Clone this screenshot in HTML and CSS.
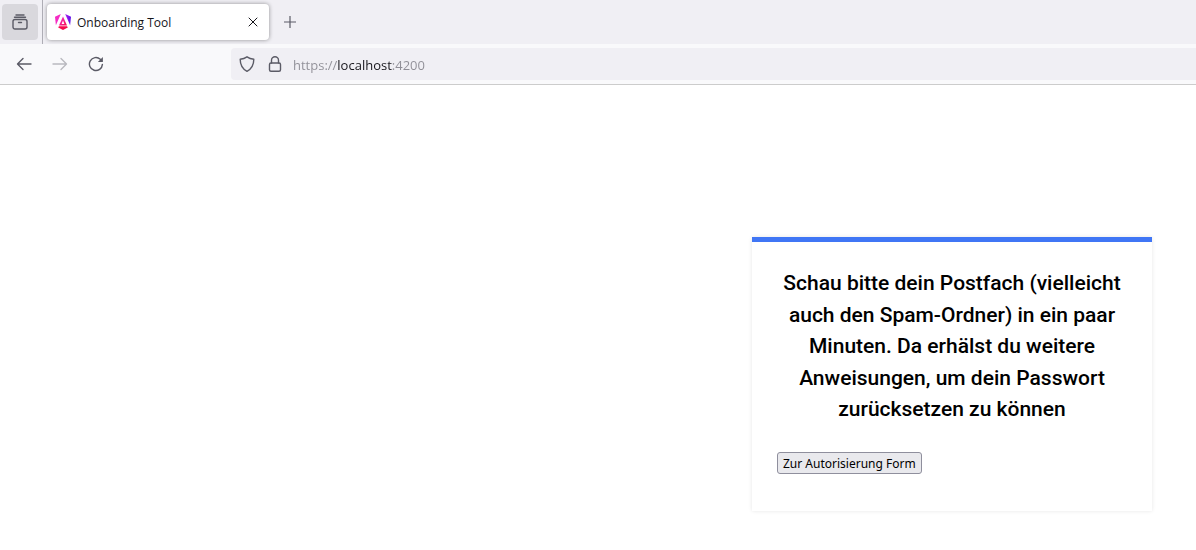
FILE: index.html
```html
<!DOCTYPE html>
<html lang="de">
<head>
<meta charset="utf-8">
<meta name="viewport" content="width=device-width, initial-scale=1">
<title>Onboarding Tool</title>
<link rel="stylesheet" href="styles.css">
</head>
<body>
<header class="browser">
  <div class="tabbar">
    <button class="firefox-view" type="button" aria-label="Firefox View">
      <svg class="icon" viewBox="0 0 16 16"><path d="M4 1h8M2.5 3.3h11"/><rect x="1" y="5.500" width="14" height="9.500" rx="2"/><path d="M6.500 8.500h3"/></svg>
    </button>
    <div class="tab">
      <svg class="logo" viewBox="0 0 16 16" aria-hidden="true">
        <defs>
          <linearGradient id="wing" x1="0" y1="0" x2="1" y2="0"><stop offset="0" stop-color="#b01bf0"/><stop offset="1" stop-color="#5c13e8"/></linearGradient>
          <linearGradient id="core" x1="0" y1="0" x2="1" y2="1"><stop offset="0" stop-color="#f42bdc"/><stop offset="1" stop-color="#f60b49"/></linearGradient>
        </defs>
        <path fill="#f52bc4" d="M5.800 0 0 2.700l.9 8.600z"/>
        <path fill="url(#wing)" d="M10.200 0 16 2.700l-.9 8.600z"/>
        <path fill="url(#core)" fill-rule="evenodd" d="M8 2.500 4 11.500h8zM8 6.500l1.400 3.400H6.600z"/>
        <path fill="#f6084f" d="M3.900 12.300h8.200l.7 1.300L8 16l-4.800-2.400z"/>
      </svg>
      <span class="tab-title">Onboarding Tool</span>
      <button class="icon-button tab-close" type="button" aria-label="Tab schließen">
        <svg class="icon icon-small" viewBox="0 0 10 10"><path d="M1 1l8 8M9 1 1 9"/></svg>
      </button>
    </div>
    <button class="icon-button new-tab" type="button" aria-label="Neuer Tab">
      <svg class="icon icon-plus" viewBox="0 0 12 12"><path d="M6 0v12M0 6h12"/></svg>
    </button>
  </div>
  <div class="toolbar">
    <nav class="history" aria-label="Navigation">
      <button class="icon-button" type="button" aria-label="Zurück">
        <svg class="icon" viewBox="0 0 16 16"><path d="M15 8H1.600M7 2.500 1.500 8 7 13.500"/></svg>
      </button>
      <button class="icon-button" type="button" aria-label="Vor" disabled>
        <svg class="icon" viewBox="0 0 16 16"><path d="M1 8h13.400M9 2.500 14.500 8 9 13.500"/></svg>
      </button>
      <button class="icon-button" type="button" aria-label="Neu laden">
        <svg class="icon" viewBox="0 0 16 16"><path d="M14.400 8.400A6.500 6.500 0 1 1 12.300 3.200L13.500 4.400"/><path class="solid" d="M14.900 1v5H9.900z"/></svg>
      </button>
    </nav>
    <div class="address">
      <svg class="icon" viewBox="0 0 16 16"><path d="M8 .8C6 2.100 3.800 2.900 1.200 3.300c0 5.400 1.500 9.300 6.800 12 5.300-2.700 6.800-6.600 6.800-12C12.200 2.900 10 2.100 8 .8z"/></svg>
      <svg class="icon" viewBox="0 0 16 16"><rect x="2.500" y="7" width="11" height="8.300" rx="1.500"/><path d="M4.500 7V4.200a3.500 3.500 0 0 1 7 0V7"/></svg>
      <input class="url" type="text" aria-label="Adresse" value="https://localhost:4200" spellcheck="false">
    </div>
  </div>
</header>
<main class="page">
  <section class="card">
    <h1 class="message">Schau bitte dein Postfach (vielleicht auch den Spam-Ordner) in ein paar Minuten. Da erhälst du weitere Anweisungen, um dein Passwort zurücksetzen zu können</h1>
    <button class="action" type="button">Zur Autorisierung Form</button>
  </section>
</main>
</body>
</html>
```

FILE: styles.css
```css
* {
  box-sizing: border-box;
}

body {
  margin: 0;
  background: #fff;
  color: #000;
  font-family: Roboto, sans-serif;
}

button {
  font: inherit;
  color: inherit;
}

.browser {
  color: #5b5b66;
  font-family: "Open Sans", "Noto Sans", sans-serif;
  border-bottom: 1px solid #ccc;
}

.tabbar {
  display: flex;
  align-items: center;
  height: 44px;
  background: #f0eff4;
}

.firefox-view {
  display: grid;
  place-items: center;
  width: 36px;
  height: 36px;
  margin: 0 4px 0 2px;
  padding: 0;
  border: 0;
  border-radius: 4px;
  background: #d9d8dd;
}

.tab {
  position: relative;
  display: flex;
  align-items: center;
  gap: 6px;
  width: 222px;
  height: 36px;
  margin-left: 5px;
  padding: 0 8px;
  border-radius: 4px;
  background: #fff;
  box-shadow: 0 0 4px rgba(0, 0, 0, 0.4);
  color: #15141a;
  font-size: 12px;
}

.tab::before {
  content: "";
  position: absolute;
  left: -5px;
  top: -4px;
  width: 1px;
  height: 44px;
  background: #aeadb5;
}

.logo {
  width: 16px;
  height: 16px;
}

.tab-title {
  flex: 1;
}

.icon-button {
  display: grid;
  place-items: center;
  width: 32px;
  height: 32px;
  padding: 0;
  border: 0;
  border-radius: 4px;
  background: transparent;
}

.icon-button:disabled {
  opacity: 0.4;
}

.tab-close {
  width: 16px;
}

.new-tab {
  margin-left: 5px;
}

.icon {
  flex: none;
  width: 16px;
  height: 16px;
  fill: none;
  stroke: currentColor;
  stroke-width: 1.4;
  stroke-linecap: round;
  stroke-linejoin: round;
}

.icon-small {
  width: 10px;
  height: 10px;
  stroke-width: 1;
}

.icon-plus {
  width: 12px;
  height: 12px;
  stroke-width: 1.2;
}

.solid {
  fill: currentColor;
  stroke: none;
}

.toolbar {
  display: flex;
  align-items: center;
  height: 40px;
  background: #f9f9fb;
}

.history {
  display: flex;
  gap: 4px;
  width: 231px;
  padding-left: 8px;
}

.address {
  display: flex;
  flex: 1;
  align-items: center;
  gap: 10px;
  height: 32px;
  padding-left: 8px;
  border-radius: 4px 0 0 4px;
  background: #f0eff4;
}

.address .icon + .icon {
  margin-left: 2px;
}

.url {
  flex: 1;
  min-width: 0;
  padding: 2px 0 0;
  border: 0;
  outline: 0;
  background: linear-gradient(90deg, #8f8e96 45px, #15141a 45px 99px, #8f8e96 99px);
  background-clip: text;
  color: transparent;
  caret-color: #15141a;
  font: 13px/20px "Open Sans", "Noto Sans", sans-serif;
}

.page {
  display: flex;
  justify-content: flex-end;
  padding: 152px 44px 32px;
}

.card {
  width: 100%;
  max-width: 400px;
  padding: 26px 25px 37px;
  border-top: 5px solid #4076f5;
  box-shadow: 0 0 4px rgba(0, 0, 0, 0.1);
}

.message {
  margin: 0 0 26px;
  font-size: 21px;
  font-weight: 500;
  line-height: 1.5;
  text-align: center;
}

.action {
  display: block;
  height: 22px;
  padding: 1px 5px 0;
  border: 1px solid #8f8f9d;
  border-radius: 3px;
  background: #e9e9ed;
  color: #000;
  font: 12px/20px "Noto Sans", sans-serif;
}
```
